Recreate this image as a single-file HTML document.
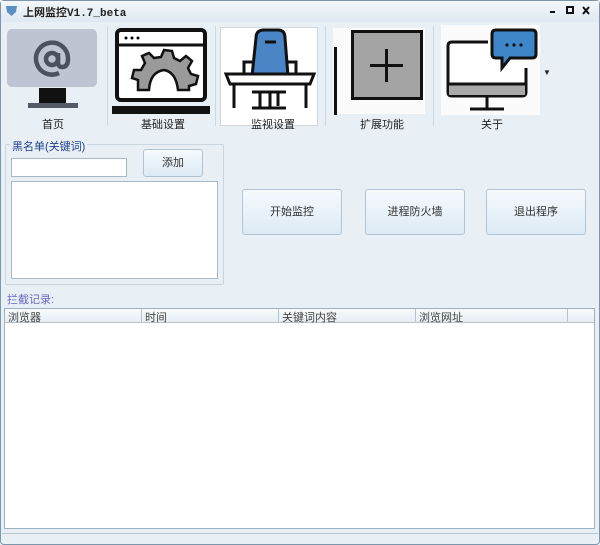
<!DOCTYPE html><html><head><meta charset="utf-8"><style>
*{box-sizing:border-box;margin:0;padding:0}
body{width:600px;height:545px;overflow:hidden;background:#e8f0f6;font-family:"Liberation Sans","Noto Sans CJK SC",sans-serif;font-size:11px;color:#222;position:relative}
.a{position:absolute}
.t{font-size:11px;white-space:nowrap}
.btn{position:absolute;border:1px solid #b3c3d2;border-radius:3px;background:linear-gradient(#f6fafd,#dceaf5);text-align:center;color:#333}
.sep{position:absolute;top:26px;width:1px;height:100px;background:#cdd7df}
</style></head><body>
<div class="a" style="left:0;top:0;width:600px;height:545px;border:1px solid #7c96ab;border-radius:4px"></div>
<div class="a" style="left:1px;top:1px;width:598px;height:21px;background:linear-gradient(#f3f7fa,#dfe9f1)"></div>
<svg class="a" style="left:5px;top:4px" width="13" height="13"><path d="M1 2 L12 2 L11 8 L6.5 12 L2 8Z" fill="#5a8fbf"/></svg>
<div class="a" style="left:23px;top:4px;font-weight:bold;font-family:'Liberation Mono','Noto Sans CJK SC',monospace;font-size:11px">上网监控V1.7_beta</div>
<svg class="a" style="left:548px;top:6px" width="45" height="10"><rect x="2" y="5" width="5" height="2" fill="#111"/><rect x="19" y="1" width="6" height="6" fill="none" stroke="#111" stroke-width="2"/><path d="M35 1 L41 8 M41 1 L35 8" stroke="#111" stroke-width="2"/></svg>

<!-- toolbar -->
<div class="a" style="left:7px;top:29px;width:90px;height:58px;background:#bec4d1;border-radius:5px"></div>
<svg class="a" style="left:33px;top:40px" width="38" height="38"><circle cx="19" cy="19" r="6" fill="none" stroke="#4a5260" stroke-width="4.5"/><path d="M25 13 L25 22 Q25 27 29 27 Q35 27 35 19 A16 16 0 1 0 26 33" fill="none" stroke="#4a5260" stroke-width="4.5"/></svg>
<div class="a" style="left:39px;top:88px;width:27px;height:16px;background:#111"></div>
<div class="a" style="left:28px;top:103px;width:50px;height:5px;background:#555b66"></div>
<div class="a t" style="left:42px;top:116px">首页</div>
<div class="sep" style="left:107px"></div>

<svg class="a" style="left:112px;top:28px" width="98" height="88"><rect x="5" y="2" width="88" height="70" rx="4" fill="#fff" stroke="#111" stroke-width="4"/><line x1="5" y1="17" x2="93" y2="17" stroke="#111" stroke-width="3"/><circle cx="14" cy="10" r="1.5"/><circle cx="20" cy="10" r="1.5"/><circle cx="26" cy="10" r="1.5"/><path d="M26 62 L26 52 L20 50 L22 42 L29 42 L33 35 L30 28 L37 25 L42 30 L49 29 L52 22 L60 23 L62 30 L68 33 L74 28 L80 33 L76 40 L79 46 L86 48 L84 56 L77 58 L77 62 L66 62 Q64 44 52 42 Q38 44 37 62Z" fill="#9a9a9a" stroke="#111" stroke-width="2.5"/><rect x="0" y="78" width="98" height="8" fill="#111"/></svg>
<div class="a t" style="left:141px;top:116px">基础设置</div>
<div class="sep" style="left:215px"></div>

<div class="a" style="left:220px;top:27px;width:98px;height:99px;background:#fff;border:1px solid #cfd6dc"></div>
<svg class="a" style="left:224px;top:28px" width="92" height="86"><path d="M32 10 Q32 2 40 2 L54 2 Q61 2 61 10 L64 48 L28 48Z" fill="#4a86c5" stroke="#111" stroke-width="3"/><line x1="41" y1="14" x2="52" y2="14" stroke="#111" stroke-width="3"/><path d="M20 48 L20 34 L28 34 M72 48 L72 34 L64 34" fill="none" stroke="#111" stroke-width="3"/><path d="M2 46 L90 46 L86 56 L6 56Z" fill="#fff" stroke="#111" stroke-width="3"/><path d="M10 56 L10 80 M82 56 L82 80 M28 64 L62 64 M36 64 L36 80 M46 64 L46 80 M54 64 L54 78 M28 80 L62 80" stroke="#111" stroke-width="3" fill="none"/></svg>
<div class="a t" style="left:251px;top:116px">监视设置</div>
<div class="sep" style="left:325px"></div>

<div class="a" style="left:333px;top:28px;width:92px;height:86px;background:#fbfbfb"></div>
<div class="a" style="left:334px;top:47px;width:3px;height:68px;background:#111"></div>
<div class="a" style="left:351px;top:30px;width:72px;height:70px;background:#a4a4a4;border:3px solid #111"></div>
<div class="a" style="left:385px;top:49px;width:3px;height:33px;background:#111"></div>
<div class="a" style="left:370px;top:64px;width:33px;height:3px;background:#111"></div>
<div class="a t" style="left:360px;top:116px">扩展功能</div>
<div class="sep" style="left:433px"></div>

<div class="a" style="left:441px;top:25px;width:99px;height:90px;background:#fbfbfb"></div>
<svg class="a" style="left:444px;top:28px" width="94" height="86"><path d="M44 14 L8 14 Q4 14 4 18 L4 64 Q4 68 8 68 L78 68 Q82 68 82 64 L82 40" fill="#fff" stroke="#111" stroke-width="3"/><rect x="5" y="57" width="76" height="10" fill="#a9a9a9"/><line x1="4" y1="56" x2="82" y2="56" stroke="#111" stroke-width="3"/><line x1="43" y1="68" x2="43" y2="80" stroke="#111" stroke-width="3"/><line x1="26" y1="81" x2="60" y2="81" stroke="#111" stroke-width="3"/><path d="M52 2 L88 2 Q92 2 92 6 L92 26 Q92 30 88 30 L66 30 L58 40 L58 30 L52 30 Q48 30 48 26 L48 6 Q48 2 52 2Z" fill="#3f85c9" stroke="#111" stroke-width="3"/><circle cx="63" cy="17" r="1.6" fill="#111"/><circle cx="70" cy="17" r="1.6" fill="#111"/><circle cx="77" cy="17" r="1.6" fill="#111"/></svg>
<div class="a t" style="left:481px;top:116px">关于</div>
<div class="a" style="left:543px;top:68px;font-size:8px">▼</div>

<!-- group -->
<div class="a" style="left:5px;top:144px;width:219px;height:141px;border:1px solid #c9d5df;border-radius:2px"></div>
<div class="a t" style="left:10px;top:138px;background:#e8f0f6;padding:0 2px;color:#1e3f8a">黑名单(关键词)</div>
<div class="a" style="left:11px;top:158px;width:116px;height:19px;background:#fff;border:1px solid #a9b8c6"></div>
<div class="btn" style="left:143px;top:149px;width:60px;height:28px;line-height:26px">添加</div>
<div class="a" style="left:11px;top:181px;width:207px;height:98px;background:#fff;border:1px solid #a9b8c6"></div>

<div class="btn" style="left:242px;top:189px;width:100px;height:46px;line-height:44px">开始监控</div>
<div class="btn" style="left:365px;top:189px;width:100px;height:46px;line-height:44px">进程防火墙</div>
<div class="btn" style="left:486px;top:189px;width:100px;height:46px;line-height:44px">退出程序</div>

<div class="a t" style="left:7px;top:291px;color:#6a68c0">拦截记录:</div>
<div class="a" style="left:4px;top:308px;width:591px;height:221px;background:#fff;border:1px solid #9fb0bf"></div>
<div class="a" style="left:5px;top:309px;width:589px;height:14px;background:linear-gradient(#f7fafc,#e6eef4);border-bottom:1px solid #b6c4cf"></div>
<div class="a" style="left:141px;top:309px;width:1px;height:14px;background:#b6c4cf"></div>
<div class="a" style="left:278px;top:309px;width:1px;height:14px;background:#b6c4cf"></div>
<div class="a" style="left:415px;top:309px;width:1px;height:14px;background:#b6c4cf"></div>
<div class="a" style="left:567px;top:309px;width:1px;height:14px;background:#b6c4cf"></div>
<div class="a t" style="left:8px;top:309px;color:#444">浏览器</div>
<div class="a t" style="left:145px;top:309px;color:#444">时间</div>
<div class="a t" style="left:282px;top:309px;color:#444">关键词内容</div>
<div class="a t" style="left:419px;top:309px;color:#444">浏览网址</div>
<div class="a" style="left:2px;top:533px;width:596px;height:1px;background:#b8c6d0"></div>
</body></html>
